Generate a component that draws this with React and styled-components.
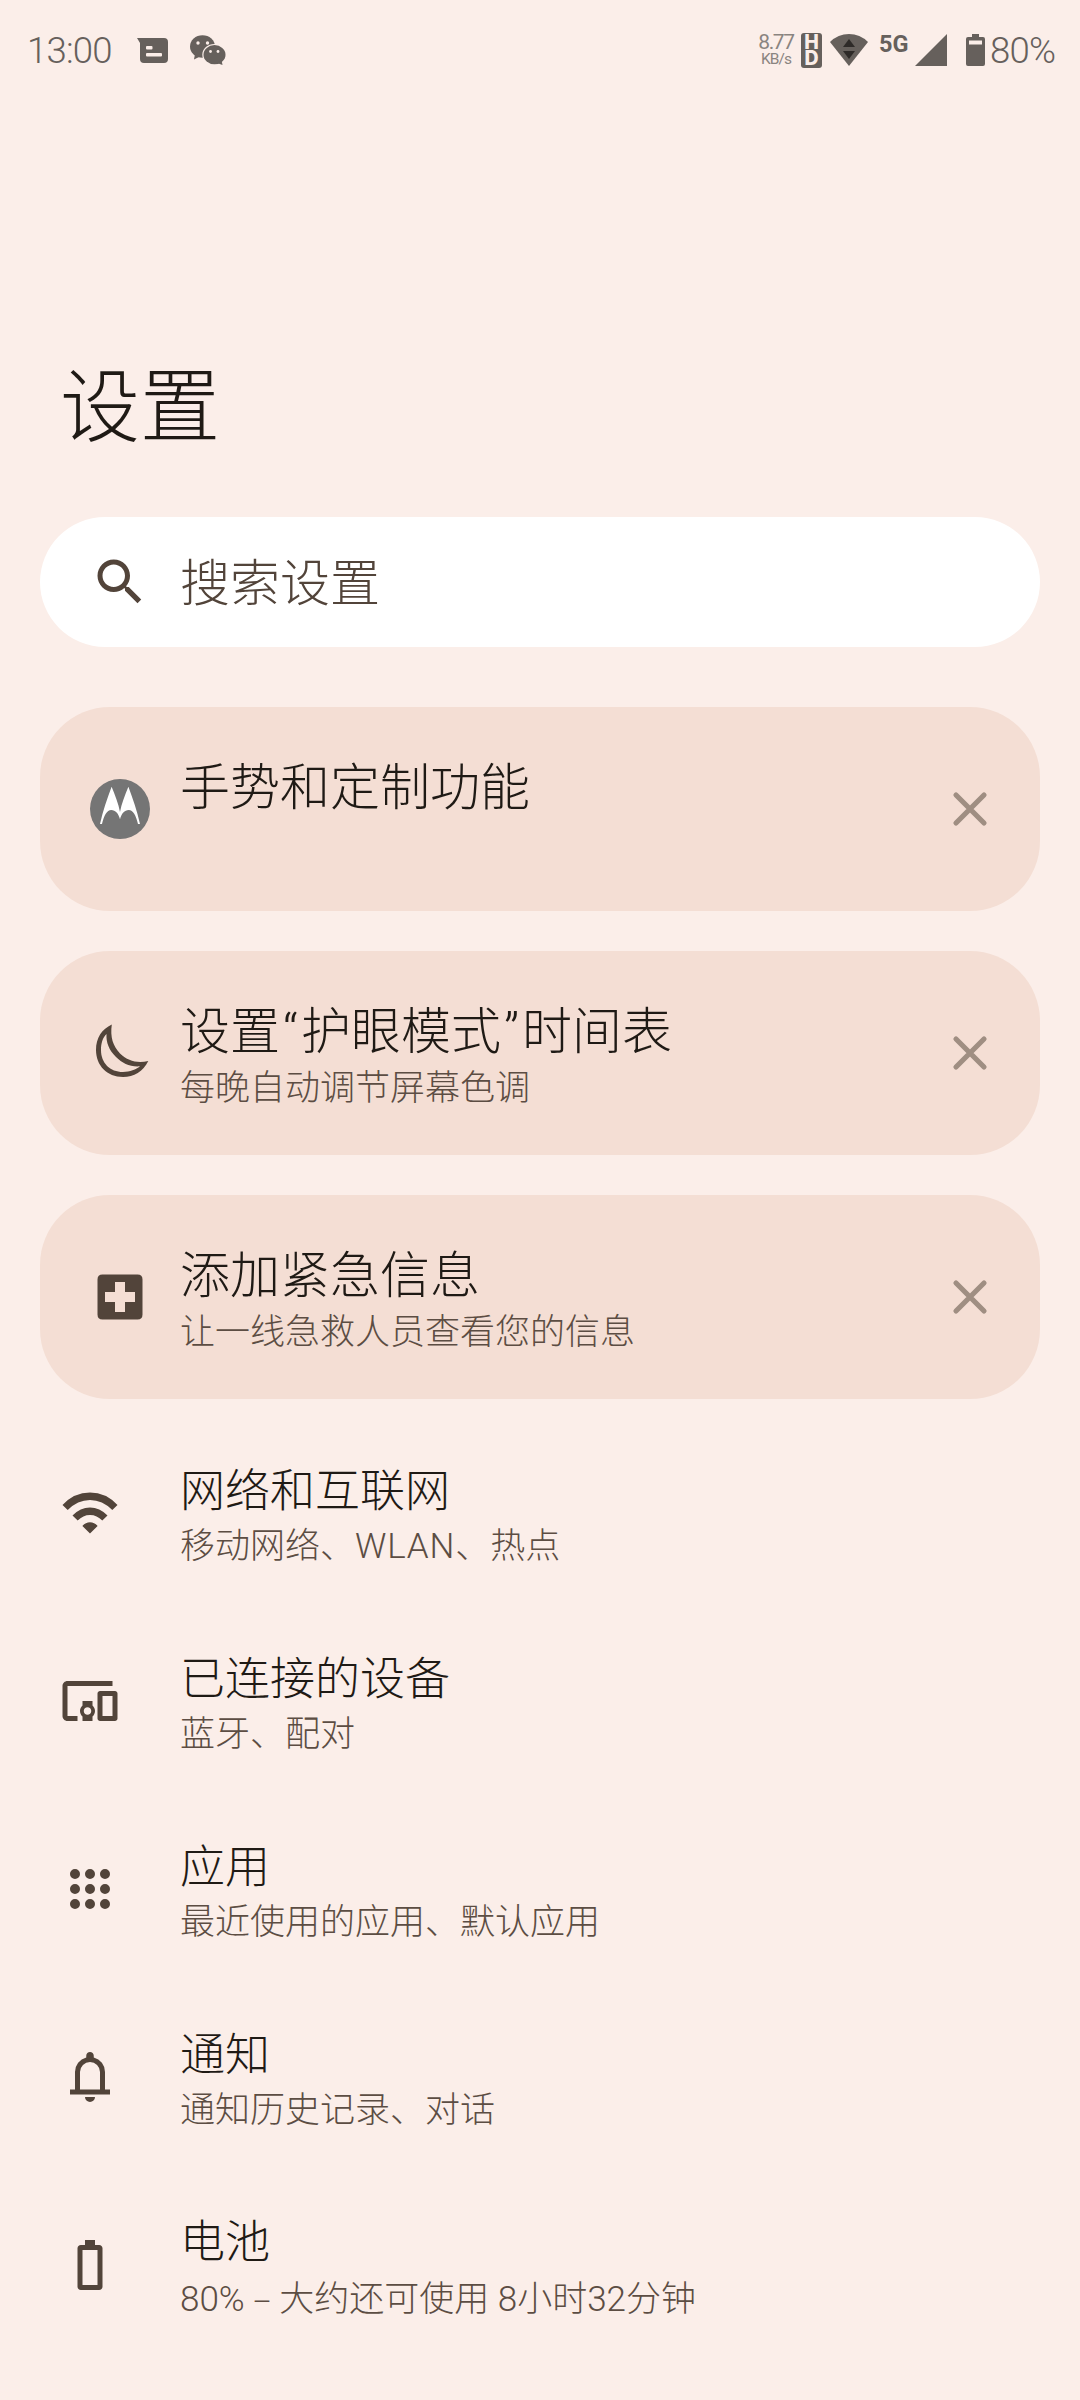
import React from 'react';
import styled, { createGlobalStyle } from 'styled-components';

const Global = createGlobalStyle`
  html, body { margin: 0; padding: 0; background: #fbeee9; }
  * { box-sizing: border-box; }
`;

const Screen = styled.div`
  width: 1080px;
  height: 2400px;
  overflow: hidden;
  background: #fbeee9;
  color: #1f1a15;
  font-family: Roboto, 'Noto Sans CJK SC', sans-serif;
  font-weight: 300;
  display: flex;
  flex-direction: column;
`;

const StatusBar = styled.header`
  height: 100px;
  padding: 0 25px 0 27px;
  display: flex;
  justify-content: space-between;
  align-items: center;
  color: #66605c;
  svg { display: block; flex: none; }
`;
const StatusGroup = styled.div`
  display: flex;
  align-items: center;
  height: 100px;
`;
const StatusText = styled.span`
  font-size: 36.5px;
  font-weight: 300;
  line-height: 40px;
  letter-spacing: -0.8px;
  padding-top: 1px;
  width: ${(p) => p.$w}px;
  white-space: nowrap;
`;
const Speed = styled.div`
  width: 42px;
  display: flex;
  flex-direction: column;
  align-items: center;
  font-weight: 400;
  color: #8a8480;
`;
const SpeedValue = styled.span`
  font-size: 21px;
  line-height: 18px;
  letter-spacing: -1.4px;
`;
const SpeedUnit = styled.span`
  font-size: 15.5px;
  line-height: 16px;
  letter-spacing: -0.9px;
`;
const HdBadge = styled.div`
  width: 21px;
  height: 35px;
  border-radius: 3px;
  background: #66605c;
  color: #fbeee9;
  display: flex;
  flex-direction: column;
  align-items: center;
  justify-content: center;
  font-family: Inter, sans-serif;
  font-size: 19.5px;
  line-height: 16px;
  font-weight: 800;
`;
const Network = styled.span`
  font-size: 23.5px;
  line-height: 24px;
  font-weight: 700;
  width: 36px;
  padding-bottom: 13px;
`;
const Space = styled.span`
  flex: none;
  width: ${(p) => p.$w}px;
`;

const Title = styled.h1`
  margin: 0;
  padding: 260px 0 0 60px;
  height: 417px;
  font-size: 80px;
  line-height: 96px;
  font-weight: 300;
`;

const Content = styled.main`
  padding: 0 40px;
  display: flex;
  flex-direction: column;
`;
const SearchBar = styled.div`
  height: 130px;
  border-radius: 65px;
  background: #fff;
  padding-left: 50px;
  display: flex;
  align-items: center;
  gap: 30px;
  color: #52443a;
  font-size: 50px;
  line-height: 60px;
`;
const SearchHint = styled.span`
  padding-top: 3px;
`;
const Cards = styled.section`
  padding: 60px 0 20px;
  display: flex;
  flex-direction: column;
  gap: 40px;
`;
const Card = styled.article`
  height: 204px;
  border-radius: 70px;
  background: #f4ded4;
  padding: 0 50px;
  display: flex;
  align-items: center;
`;
const CardBody = styled.div`
  flex: 1;
  height: 204px;
  padding: 51px 0 0 30px;
`;
const CardTitle = styled.div`
  font-size: 50px;
  line-height: 60px;
`;
const Quote = styled.span`
  display: inline-block;
  width: 21px;
  text-align: center;
`;
const CardSub = styled.div`
  font-size: 35px;
  line-height: 54px;
  color: #5c4d43;
`;
const CloseButton = styled.button`
  border: 0;
  padding: 0;
  background: none;
  width: 40px;
  height: 40px;
  display: flex;
`;

const Item = styled.div`
  height: 188px;
  padding-left: 20px;
  display: flex;
  align-items: center;
  gap: 60px;
`;
const ItemBody = styled.div`
  display: flex;
  flex-direction: column;
  padding-top: 12px;
`;
const ItemTitle = styled.div`
  font-size: 45px;
  line-height: 54px;
`;
const ItemSub = styled.div`
  font-size: 35px;
  line-height: 55px;
  color: #5c4d43;
`;
const Latin = styled.span`
  letter-spacing: 0.8px;
`;
const Dash = styled.span`
  font-family: 'Open Sans', sans-serif;
`;

const Svg = styled.svg`
  display: block;
  flex: none;
  width: 60px;
  height: 60px;
  fill: #52443a;
`;
const Icon = ({ d }) => (
  <Svg viewBox="0 0 24 24"><path fillRule="evenodd" d={d} /></Svg>
);

const SEARCH = 'M15.5 14h-.79l-.28-.27C15.41 12.59 16 11.11 16 9.5 16 5.91 13.09 3 9.5 3S3 5.91 3 9.5 5.91 16 9.5 16c1.61 0 3.09-.59 4.23-1.57l.27.28v.79l5 4.99L20.49 19l-4.99-5zm-6 0C7.01 14 5 11.99 5 9.5S7.01 5 9.5 5 14 7.01 14 9.5 11.99 14 9.5 14z';
const EMERGENCY = 'M5 3H19Q21 3 21 5V19Q21 21 19 21H5Q3 21 3 19V5Q3 3 5 3ZM10 6V10H6V14H10V18H14V14H18V10H14V6Z';
const DEVICES = 'M3 6h18V4H3c-1.100 0-2 .9-2 2v12c0 1.100.9 2 2 2h4v-2H3V6zm10 6H9v1.780c-.61.550-1 1.330-1 2.220s.39 1.670 1 2.220V20h4v-1.780c.61-.55 1-1.340 1-2.220s-.39-1.670-1-2.220V12zm-2 5.500c-.83 0-1.500-.67-1.500-1.500s.67-1.500 1.500-1.500 1.500.67 1.500 1.500-.67 1.500-1.500 1.500zM22 8h-6c-.5 0-1 .5-1 1v10c0 .5.5 1 1 1h6c.5 0 1-.5 1-1V9c0-.5-.5-1-1-1zm-1 10h-4v-8h4v8z';
const APPS = [4, 10, 16].flatMap((y) => [4, 10, 16].map((x) => `M${x - 0.1 + 0.1} ${y + 2}a2 2 0 1 0 4 0a2 2 0 1 0 -4 0Z`)).join('');
const BELL = 'M4 19v-2h2v-7q0-2.075 1.250-3.688Q8.500 4.700 10.500 4.200v-.7q0-.625.438-1.062Q11.375 2 12 2t1.062.438q.438.437.438 1.062v.7q2 .5 3.250 2.112Q18 7.925 18 10v7h2v2ZM12 22q-.825 0-1.413-.587Q10 20.825 10 20h4q0 .825-.587 1.413Q12.825 22 12 22Zm-4-5h8v-7q0-1.650-1.175-2.825Q13.650 6 12 6t-2.825 1.175Q8 8.350 8 10Z';
const BATTERY = 'M15.670 4H14V2h-4v2H8.330C7.600 4 7 4.600 7 5.330v15.330C7 21.400 7.600 22 8.330 22h7.330c.74 0 1.340-.6 1.340-1.330V5.330C17 4.600 16.400 4 15.670 4zM15 20H9V6h6z';

const WifiIcon = () => (
  <Svg viewBox="0 0 60 60">
    <path d="M30 50.500L22.400 42.900Q25.700 39.200 30 39.200T37.600 42.900ZM17.700 37.600L12.500 32.500Q20.300 24.500 30 24.500T47.500 32.500L42.300 37.600Q37 32 30 32T17.700 37.600ZM7.700 27.100L2.500 22Q14 9.500 30 9.500T57.500 22L52.300 27.100Q42.500 17 30 17T7.700 27.100Z" />
  </Svg>
);
const MotoIcon = () => (
  <Svg viewBox="0 0 60 60">
    <circle cx="30" cy="30" r="30" fill="#757575" />
    <path fill="#fff" d="M21.600 7.800C25 16 28.500 25 30 33C31.500 25 35 16 38.400 7.800C43 20 47 32 50 45H48C46 36.500 43 31 38.800 31C34.500 31 31.500 34.500 30 40.300C28.500 34.500 25.500 31 21.200 31C17 31 14 36.500 12 45H10C13 32 17 20 21.600 7.800Z" />
  </Svg>
);
const MoonIcon = () => (
  <Svg viewBox="0 0 60 60">
    <path
      fillRule="evenodd"
      d="M21.800 1.500C20 14 23 23 30 30.500C38 38 47 40.500 58.300 38C53 48.500 44 54 33 54C17 54 6 42.500 6 27C6 14.500 12 6 21.800 1.500ZM16.500 11C12.500 15 11 20.500 11 27C11 40 20 49 33 49C40 49 46 46.500 50 43.300C40 44 32.500 40.500 26 34C19 27 16 19.500 16.500 11Z"
    />
  </Svg>
);
const EmergencyIcon = () => <Icon d={EMERGENCY} />;

const CloseIcon = () => (
  <svg width="40" height="40" viewBox="0 0 40 40">
    <path d="M6 6L34 34M34 6L6 34" stroke="#9f8e82" strokeWidth="5.200" strokeLinecap="round" />
  </svg>
);

const MessageIcon = () => (
  <svg width="31" height="25" viewBox="0 0 31 25" fill="#66605c">
    <path fillRule="evenodd" d="M0 0H27Q31 0 31 4V21Q31 25 27 25H7Q3 25 3 21V5ZM10 8Q9 8 9 9V10.500Q9 11.500 10 11.500H14.500Q15.500 11.500 15.500 10.500V9Q15.500 8 14.500 8ZM10 15Q9 15 9 16V17.500Q9 18.500 10 18.500H24Q25 18.500 25 17.500V16Q25 15 24 15Z" />
  </svg>
);
const WechatIcon = () => (
  <svg width="36" height="30" viewBox="0 0 36 30" fill="#66605c">
    <ellipse cx="12.500" cy="11.500" rx="12.500" ry="11.300" />
    <path d="M5 19L4 24.500L10 21.500Z" />
    <ellipse cx="24.500" cy="19.700" rx="12.200" ry="10.800" fill="#fbeee9" />
    <ellipse cx="24.500" cy="19.700" rx="11" ry="9.600" />
    <path d="M27 28L32.500 30L31.500 25Z" />
    <g fill="#fbeee9">
      <circle cx="8" cy="8" r="1.700" />
      <circle cx="17.500" cy="8" r="1.700" />
      <circle cx="20.500" cy="16.500" r="1.400" />
      <circle cx="28" cy="16.500" r="1.400" />
    </g>
  </svg>
);
const StatusWifi = () => (
  <svg width="38" height="32" viewBox="0 0 38 32">
    <path fill="#66605c" d="M0 8Q8 0 19 0T38 8L19 32Z" />
    <path fill="#2e2a28" d="M19 5L25 13H13ZM19 25L13 17H25Z" />
  </svg>
);
const SignalIcon = () => (
  <svg width="32" height="32" viewBox="0 0 32 32"><path fill="#66605c" d="M32 0V32H0Z" /></svg>
);
const StatusBattery = () => (
  <svg width="19" height="32" viewBox="0 0 19 32" fill="#66605c">
    <path fillRule="evenodd" d="M6 0H13V3H17Q19 3 19 5V30Q19 32 17 32H2Q0 32 0 30V5Q0 3 2 3H6ZM3 6.500V10.500H16V6.500Z" />
  </svg>
);

const CARDS = [
  { id: 'gestures', icon: MotoIcon, title: '手势和定制功能' },
  {
    id: 'night',
    icon: MoonIcon,
    title: <>设置<Quote>“</Quote>护眼模式<Quote>”</Quote>时间表</>,
    sub: '每晚自动调节屏幕色调',
  },
  { id: 'emergency', icon: EmergencyIcon, title: '添加紧急信息', sub: '让一线急救人员查看您的信息' },
];
const ITEMS = [
  { icon: <WifiIcon />, title: '网络和互联网', sub: <>移动网络、<Latin>WLAN</Latin>、热点</> },
  { icon: <Icon d={DEVICES} />, title: '已连接的设备', sub: '蓝牙、配对' },
  { icon: <Icon d={APPS} />, title: '应用', sub: '最近使用的应用、默认应用' },
  { icon: <Icon d={BELL} />, title: '通知', sub: '通知历史记录、对话' },
  { icon: <Icon d={BATTERY} />, title: '电池', sub: <>80% <Dash>–</Dash> 大约还可使用 8小时32分钟</> },
];

export default function App() {
  return (
    <Screen lang="zh-CN">
      <Global />
      <StatusBar>
        <StatusGroup>
          <StatusText $w={110}>13:00</StatusText>
          <MessageIcon />
          <Space $w={22} />
          <WechatIcon />
        </StatusGroup>
        <StatusGroup>
          <Speed>
            <SpeedValue>8.77</SpeedValue>
            <SpeedUnit>KB/s</SpeedUnit>
          </Speed>
          <Space $w={4} />
          <HdBadge><span>H</span><span>D</span></HdBadge>
          <Space $w={8} />
          <StatusWifi />
          <Space $w={11} />
          <Network>5G</Network>
          <SignalIcon />
          <Space $w={19} />
          <StatusBattery />
          <Space $w={5} />
          <StatusText $w={65}>80%</StatusText>
        </StatusGroup>
      </StatusBar>
      <Title>设置</Title>
      <Content>
        <SearchBar>
          <Icon d={SEARCH} />
          <SearchHint>搜索设置</SearchHint>
        </SearchBar>
        <Cards>
          {CARDS.map(({ id, icon: CardIcon, title, sub }) => (
            <Card key={id}>
              <CardIcon />
              <CardBody>
                <CardTitle>{title}</CardTitle>
                {sub && <CardSub>{sub}</CardSub>}
              </CardBody>
              <CloseButton aria-label="关闭"><CloseIcon /></CloseButton>
            </Card>
          ))}
        </Cards>
        {ITEMS.map(({ icon, title, sub }) => (
          <Item key={title}>
            {icon}
            <ItemBody>
              <ItemTitle>{title}</ItemTitle>
              <ItemSub>{sub}</ItemSub>
            </ItemBody>
          </Item>
        ))}
      </Content>
    </Screen>
  );
}
